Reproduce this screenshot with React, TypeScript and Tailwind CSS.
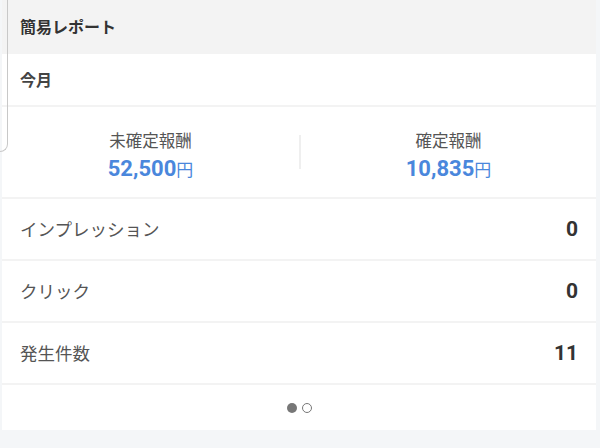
const rows = [
  { label: "インプレッション", value: "0" },
  { label: "クリック", value: "0" },
  { label: "発生件数", value: "11" },
];

const rewards = [
  { label: "未確定報酬", value: "52,500" },
  { label: "確定報酬", value: "10,835" },
];

export default function App() {
  return (
    <div
      className="relative h-[448px] w-[600px] overflow-hidden bg-[#f4f6f8] px-[2px] pr-[4px]"
      style={{ fontFamily: "Roboto, 'Noto Sans CJK JP', sans-serif" }}
    >
      <div className="flex flex-col gap-[2px] bg-[#f3f3f3]">
        <div className="flex h-[52px] items-center bg-[#f3f3f3] px-[18px] pt-[4px] text-[16px] font-bold text-[#333]">
          簡易レポート
        </div>
        <div className="flex h-[51px] items-center bg-white px-[18px] pt-[2px] text-[16px] font-bold text-[#444]">
          今月
        </div>
        <div className="flex h-[90px] items-center bg-white">
          {rewards.map((r, i) => (
            <div key={i} className="flex flex-1 items-center">
              {i > 0 && <div className="h-[34px] w-[2px] bg-[#efefef]"></div>}
              <div className="flex flex-1 flex-col items-center pt-[10px]">
                <div className="text-[16.5px] leading-[24px] text-[#555]">{r.label}</div>
                <div className="text-[22px] font-bold leading-[30px] text-[#4a87dc]">
                  {r.value}
                  <span className="text-[17px] font-normal">円</span>
                </div>
              </div>
            </div>
          ))}
        </div>
        {rows.map((row) => (
          <div
            key={row.label}
            className="flex h-[60px] items-center justify-between bg-white pl-[18px] pr-[18px] pt-[2px]"
          >
            <span className="text-[17.5px] text-[#555]">{row.label}</span>
            <span className="text-[21px] font-bold text-[#333]">{row.value}</span>
          </div>
        ))}
        <div className="flex h-[45px] items-center justify-center gap-[5px] bg-white">
          <span className="h-[10px] w-[10px] rounded-full bg-[#777]"></span>
          <span className="h-[10px] w-[10px] rounded-full border-[1.5px] border-[#777]"></span>
        </div>
      </div>
      <div className="absolute left-[-10px] top-[0px] h-[152px] w-[18px] rounded-br-[8px] border-b border-r border-[#c8c8c8]"></div>
    </div>
  );
}
